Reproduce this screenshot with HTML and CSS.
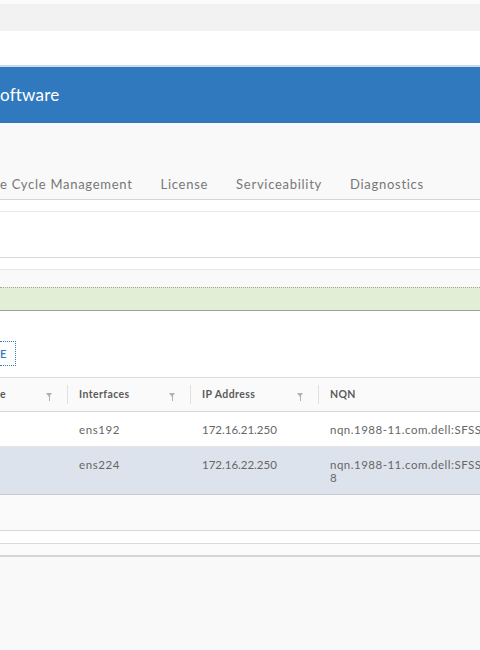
FILE: index.html
```html
<!DOCTYPE html>
<html lang="en">
<head>
  <meta charset="UTF-8" />
  <meta name="viewport" content="width=device-width, initial-scale=1.0" />
  <title>SmartFabric Storage Software - Discovery</title>
  <link rel="stylesheet" href="styles.css">
</head>

<body>
  <div class="topstrip"></div>
  <div class="browserbar"></div>
  <div class="whitebar"></div>

  <header class="appheader">
    <span class="title">oftware</span>
  </header>

  <nav class="tabs">
    <span class="tab">e Cycle Management</span>
    <span class="tab">License</span>
    <span class="tab">Serviceability</span>
    <span class="tab">Diagnostics</span>
  </nav>

  <div class="subnav"></div>
  <div class="toolbar"></div>
  <div class="spacer"></div>

  <div class="alert"></div>

  <div class="actions">
    <button class="btn">E</button>
  </div>

  <div class="grid">
    <div class="row head">
      <div class="cell c1"><span>e</span><span class="filter"></span></div>
      <div class="cell c2"><span>Interfaces</span><span class="filter"></span></div>
      <div class="cell c3"><span>IP Address</span><span class="filter"></span></div>
      <div class="cell c4"><span>NQN</span></div>
    </div>
    <div class="row">
      <div class="cell c1"></div>
      <div class="cell c2">ens192</div>
      <div class="cell c3">172.16.21.250</div>
      <div class="cell c4">nqn.1988-11.com.dell:SFSS</div>
    </div>
    <div class="row selected">
      <div class="cell c1"></div>
      <div class="cell c2">ens224</div>
      <div class="cell c3">172.16.22.250</div>
      <div class="cell c4">nqn.1988-11.com.dell:SFSS<br>8</div>
    </div>
  </div>

  <div class="gridfooter"></div>
  <div class="pager"></div>
  <div class="bottomline"></div>
  <div class="rest"></div>
</body>
</html>
```

FILE: styles.css
```css
/* Root Variables */
:root {
  --blue: #3179be;
  --line: #dcdcdc;
  --text: #666;
  --font: 'Lato', 'Open Sans', sans-serif;
}

body {
  margin: 0;
  font-family: var(--font);
  background: #f9f9f9;
  color: var(--text);
  overflow: hidden;
}

/* Browser chrome */
.topstrip {
  height: 4px;
  background: #fbfbfb;
}

.browserbar {
  height: 27px;
  background: #f2f2f2;
}

.whitebar {
  height: 34px;
  background: #fff;
}

/* App header */
.appheader {
  height: 56px;
  background: var(--blue);
  border-top: 2px solid #c9dcee;
  display: flex;
  align-items: center;
  color: #fff;
}

.appheader .title {
  font-size: 17px;
  letter-spacing: 0.2px;
  margin-top: -2px;
}

/* Tabs */
.tabs {
  height: 77px;
  background: #f9f9f9;
  border-bottom: 1px solid #d6d6d6;
  display: flex;
  align-items: flex-end;
  gap: 28px;
  padding-bottom: 7px;
  box-sizing: border-box;
}

.tab {
  font-size: 13px;
  color: #777;
  letter-spacing: 0.72px;
}

.subnav {
  height: 11px;
  background: #fff;
  border-bottom: 1px solid #e8e8e8;
}

.toolbar {
  height: 45px;
  background: #fff;
  border-bottom: 1px solid #d8d8d8;
}

.spacer {
  height: 11px;
  background: #fff;
  border-bottom: 1px solid #e6e6e6;
}

.alert {
  margin-top: 17px;
  height: 22px;
  background: #e2eed6;
  border-top: 1px dotted #9fae92;
  border-bottom: 1px solid #9aa78f;
}

/* Actions */
.actions {
  background: #fff;
  padding: 30px 0 11px;
}

.btn {
  font-family: var(--font);
  font-size: 11px;
  font-weight: 600;
  color: var(--blue);
  background: #fff;
  border: 1px dotted var(--blue);
  border-left: none;
  height: 25px;
  padding: 0 9px 0 0;
  display: block;
}

/* Grid */
.grid {
  background: #fff;
  border-top: 1px solid var(--line);
}

.row {
  display: flex;
  border-bottom: 1px solid #e4e4e4;
  overflow: hidden;
}

.row.head {
  background: #fafafa;
  border-bottom: 1px solid #d8d8d8;
  height: 33px;
}

.row.selected {
  background: #dde3ec;
  border-bottom: 1px solid #c8ccd2;
}

.cell {
  flex-shrink: 0;
  box-sizing: border-box;
  padding: 11px 12px 10px;
  font-size: 11.5px;
  line-height: 13px;
  white-space: nowrap;
}

.row.head .cell {
  display: flex;
  align-items: center;
  justify-content: space-between;
  padding: 0 12px;
  font-size: 10.5px;
  font-weight: 700;
  letter-spacing: 0.4px;
  color: #5b5b5b;
  position: relative;
}

.row.head .cell.c1 {
  padding-left: 0;
}

.row.head .cell + .cell::before {
  content: '';
  position: absolute;
  left: 0;
  top: 7px;
  bottom: 7px;
  border-left: 1px solid #e0e0e0;
}

.c1 { width: 67px; }
.c2 { width: 123px; letter-spacing: 0.6px; }
.c3 { width: 128px; }
.c4 { width: 170px; letter-spacing: 0.5px; }

.filter {
  width: 0;
  height: 0;
  border-left: 3.5px solid transparent;
  border-right: 3.5px solid transparent;
  border-top: 4px solid #b0b0b0;
  position: relative;
  margin-right: 3px;
}

.filter::after {
  content: '';
  position: absolute;
  left: -0.5px;
  top: -1px;
  width: 1.5px;
  height: 5px;
  background: #b0b0b0;
}

/* Below grid */
.gridfooter {
  height: 35px;
  background: #fafafa;
  border-bottom: 1px solid #d8d8d8;
}

.pager {
  height: 12px;
  background: #fff;
  border-bottom: 1px solid #dadada;
}

.bottomline {
  height: 11px;
  background: #fbfbfb;
  border-bottom: 2px solid #d6d6d6;
}

.rest {
  height: 100px;
  background: #f9f9f9;
}
```
